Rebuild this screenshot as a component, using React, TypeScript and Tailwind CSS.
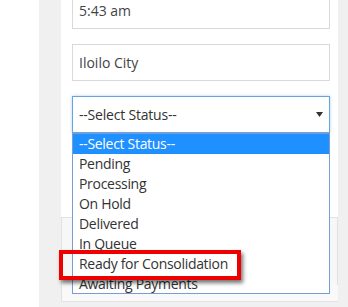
import {useState} from "react";

const statuses = [
    "--Select Status--",
    "Pending",
    "Processing",
    "On Hold",
    "Delivered",
    "In Queue",
    "Ready for Consolidation",
    "Awaiting Payments",
];

function TextField({value, className = ""}: {value: string; className?: string}) {
    return (
        <div
            className={`h-[37px] w-[258px] border border-[#d9d9d9] bg-white px-[6px] flex items-center text-[14px] text-[#444] ${className}`}
        >
            {value}
        </div>
    );
}

export default function App() {
    const [selected] = useState(0);

    return (
        <div
            className="relative flex w-[348px] h-[307px] overflow-hidden bg-white"
            style={{fontFamily: '"Open Sans", "Noto Sans", sans-serif'}}
        >
            {/* left margin */}
            <div className="w-[39px] shrink-0 bg-white" />

            {/* page */}
            <div className="flex-1 bg-[#f0f0f0] pl-[22px] pr-[10px]">
                <div className="flex flex-col">
                    {/* form card */}
                    <div className="h-[217px] bg-white pl-[11px] pt-0">
                        <TextField value="5:43 am" className="-mt-[8px]" />
                        <TextField value="Iloilo City" className="mt-[15px]" />
                        <div className="mt-[15px] h-[37px] w-[258px] border border-[#66a3e0] bg-white px-[6px] flex items-center justify-between text-[14px] text-[#333] tracking-[-0.2px] shadow-[0_0_3px_rgba(102,163,224,0.5)]">
                            <span>--Select Status--</span>
                            <svg width="7" height="5" viewBox="0 0 7 5">
                                <path d="M0 0 H7 L3.5 5 Z" fill="#333" />
                            </svg>
                        </div>
                    </div>

                    {/* footer panel */}
                    <div className="h-[68px] bg-[#f7f7f7] border-t border-l border-r border-[#e2e2e2]" />
                    <div className="h-[17px] bg-[#f9f9f9] border-b border-l border-[#e2e2e2]" />
                </div>
            </div>

            {/* open dropdown list */}
            <ul className="absolute left-[72px] top-[133px] w-[258px] h-[161px] border border-[#7a9cd3] bg-white text-[14px] text-[#333] tracking-[-0.3px]">
                {statuses.map((s, i) => (
                    <li
                        key={s}
                        className={`h-[20px] leading-[20px] pl-[6px] ${
                            i === selected ? "bg-[#1e90ff] text-white" : ""
                        }`}
                    >
                        {s}
                    </li>
                ))}
            </ul>

            {/* highlight box */}
            <div className="absolute left-[59px] top-[250px] w-[182px] h-[30px] border-[4px] border-[#ee0000] shadow-[2px_3px_4px_rgba(0,0,0,0.55)]" />
        </div>
    );
}
